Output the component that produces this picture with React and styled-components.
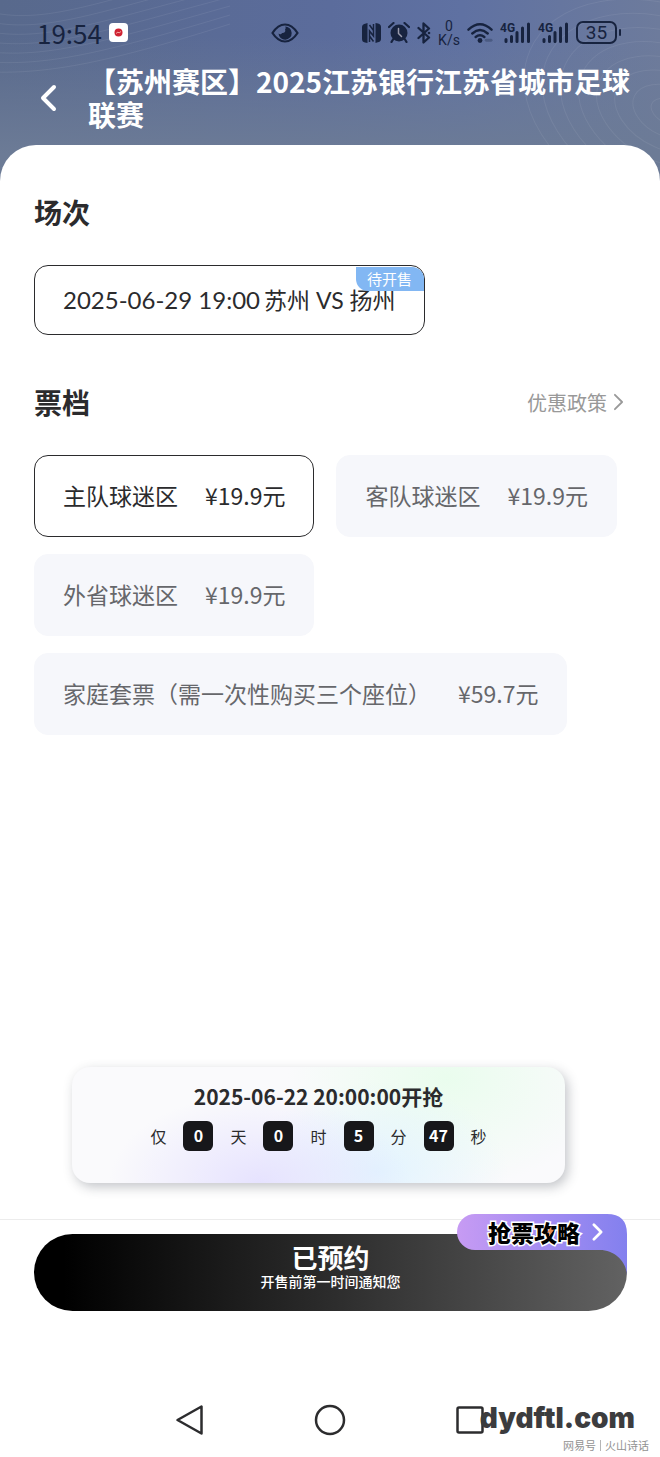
import React, { useState } from 'react'
import styled, { createGlobalStyle } from 'styled-components'

const INK = '#17233f'

const TICKETS = [
    { id: 'home', name: '主队球迷区', price: '¥19.9元' },
    { id: 'away', name: '客队球迷区', price: '¥19.9元' },
    { id: 'other', name: '外省球迷区', price: '¥19.9元' },
    { id: 'family', name: '家庭套票（需一次性购买三个座位）', price: '¥59.7元' }
]

const COUNTDOWN = [
    { value: '0', unit: '天' },
    { value: '0', unit: '时' },
    { value: '5', unit: '分' },
    { value: '47', unit: '秒' }
]

const Waves = () => (
    <WaveLines viewBox='0 0 660 181' preserveAspectRatio='none' aria-hidden='true'>
        {[0, 1, 2, 3, 4, 5, 6].map(i => (
            <path key={`l${i}`} d={`M-10 ${12 + i * 10}C50 ${26 + i * 8} 110 ${-4 + i * 11} 230 ${-30 + i * 9}`} />
        ))}
        {[0, 1, 2, 3, 4, 5, 6, 7].map(i => (
            <ellipse key={`r${i}`} cx='670' cy='112' rx={20 + i * 19} ry={12 + i * 13} transform='rotate(24 670 112)' />
        ))}
    </WaveLines>
)

const EyeIcon = () => (
    <svg width='28' height='22' viewBox='0 0 28 22' aria-hidden='true'>
        <path d='M1.500 11C5 5.500 9 2.500 14 2.500S23 5.500 26.500 11C23 16.500 19 19.500 14 19.500S5 16.500 1.500 11Z' fill='none' stroke={INK} strokeWidth='2.200' />
        <path d='M14 4.500A6.600 6.600 0 1 1 7.500 11.500C8.500 12.800 10.500 12.500 11 11C13.500 11 15 9.500 14 7.500C15 6.500 14.800 5 14 4.500Z' fill={INK} />
    </svg>
)

const NfcIcon = () => (
    <svg width='19' height='20' viewBox='0 0 19 20' aria-hidden='true'>
        <path d='M4 .5 5.500 0V20L3 19.500Q0 19 0 16V4Q0 1 4 .5ZM15 19.500 13.500 20V0L16 .5Q19 1 19 4V16Q19 19 15 19.500Z' fill={INK} />
        <path d='M7.500 19V8L11.500 13V1M7.500 2 11.500 7.500M7.500 13 11.500 18.500' fill='none' stroke={INK} strokeWidth='1.500' />
    </svg>
)

const AlarmIcon = () => (
    <svg width='22' height='21' viewBox='0 0 22 21' aria-hidden='true'>
        <circle cx='11' cy='11' r='8.500' fill={INK} />
        <path d='M1 5 5.500 1M21 5 16.500 1M5 17.500 3.500 20M17 17.500 18.500 20' stroke={INK} strokeWidth='2.200' strokeLinecap='round' />
        <path d='M10.500 6.500V11.500L13.500 14.500' fill='none' stroke='#9a9bad' strokeWidth='1.500' strokeLinecap='round' />
    </svg>
)

const BluetoothIcon = () => (
    <svg width='14' height='22' viewBox='0 0 14 22' aria-hidden='true'>
        <path d='M1.500 6 12 15.500 6.500 20.500V1.500L12 6.500 1.500 16' fill='none' stroke={INK} strokeWidth='2.300' strokeLinejoin='round' strokeLinecap='round' />
        <circle cx='12' cy='11' r='1.300' fill={INK} />
    </svg>
)

const WifiIcon = () => (
    <svg width='26' height='22' viewBox='0 0 27 22' aria-hidden='true'>
        <path d='M1.500 7.500Q13.500-3.500 25.500 7.500M5.500 11.500Q13.500 4.500 21.500 11.500M9 15.200Q13.500 11.500 18 15.200' fill='none' stroke={INK} strokeWidth='2.500' strokeLinecap='round' />
        <circle cx='13.500' cy='18.800' r='2.500' fill={INK} />
        <path d='M20 18.500H25' stroke={INK} strokeOpacity='.3' strokeWidth='3' strokeLinecap='round' />
    </svg>
)

const SignalIcon = () => (
    <svg width='31' height='28' viewBox='0 -3 31 28' aria-hidden='true'>
        <path d='M6 17.500V19.500M11.500 14.500V19.500M17 10.500V19.500M22.500 6V19.500M28.500 2V19.500' stroke={INK} strokeWidth='3' strokeLinecap='round' />
        <text x='0' y='10' fontSize='12' fontWeight='700' fontFamily='Roboto, sans-serif' fill={INK}>4G</text>
    </svg>
)

const Chevron = ({ size, color, width }) => (
    <svg width={size / 2 + 2} height={size} viewBox='0 0 12 20' aria-hidden='true'>
        <path d='M2 2 10 10 2 18' fill='none' stroke={color} strokeWidth={width} strokeLinecap='round' strokeLinejoin='round' />
    </svg>
)

const StatusBar = () => (
    <Status>
        <Clock>19:54</Clock>
        <AppBadge viewBox='0 0 19 19' aria-hidden='true'>
            <rect width='19' height='19' rx='4' fill='#fff' />
            <circle cx='9.500' cy='9.500' r='4' fill='#cf2232' />
            <path d='M7 10.500 9 9 10 10 12 8.500' fill='none' stroke='#f4a6a0' />
        </AppBadge>
        <EyeSlot><EyeIcon /></EyeSlot>
        <StatusIcons>
            <NfcIcon />
            <AlarmIcon />
            <BluetoothIcon />
            <Speed><span>0</span><span>K/s</span></Speed>
            <WifiIcon />
            <SignalIcon />
            <SignalIcon />
            <Battery><BatteryBody>35</BatteryBody><BatteryTip /></Battery>
        </StatusIcons>
    </Status>
)

const App = () => {
    const [ticket, setTicket] = useState('home')

    return (
        <Page>
            <GlobalStyle />

            <Header>
                <Waves />
                <StatusBar />
                <TitleRow>
                    <BackButton type='button' aria-label='返回'>
                        <svg width='17' height='28' viewBox='0 0 17 28'>
                            <path d='M14 3 3 14 14 25' fill='none' stroke='#fff' strokeWidth='4' strokeLinecap='round' strokeLinejoin='round' />
                        </svg>
                    </BackButton>
                    <Title>【苏州赛区】2025江苏银行江苏省城市足球联赛</Title>
                </TitleRow>
            </Header>

            <Sheet>
                <Section>
                    <Heading>场次</Heading>
                    <Session type='button'>
                        <SessionTime>2025-06-29 19:00</SessionTime>
                        <span>苏州 VS 扬州</span>
                        <SessionBadge>待开售</SessionBadge>
                    </Session>
                </Section>

                <Section>
                    <SectionHead>
                        <Heading>票档</Heading>
                        <PolicyLink href='#policy'>
                            优惠政策
                            <Chevron size={18} color='#999' width={2} />
                        </PolicyLink>
                    </SectionHead>
                    <Tickets>
                        {TICKETS.map(({ id, name, price }) => (
                            <Ticket
                                key={id}
                                type='button'
                                $active={id === ticket}
                                aria-pressed={id === ticket}
                                onClick={() => setTicket(id)}
                            >
                                <span>{name}</span>
                                <span>{price}</span>
                            </Ticket>
                        ))}
                    </Tickets>
                </Section>

                <CountdownCard>
                    <CountdownTitle>2025-06-22 20:00:00开抢</CountdownTitle>
                    <CountdownRow>
                        <span>仅</span>
                        {COUNTDOWN.map(({ value, unit }) => (
                            <React.Fragment key={unit}>
                                <Digit>{value}</Digit>
                                <span>{unit}</span>
                            </React.Fragment>
                        ))}
                    </CountdownRow>
                </CountdownCard>
            </Sheet>

            <ActionBar>
                <ReserveButton type='button'>
                    <strong>已预约</strong>
                    <small>开售前第一时间通知您</small>
                </ReserveButton>
                <GuideLink href='#guide'>
                    <GuideShape viewBox='0 0 170 62' aria-hidden='true'>
                        <defs>
                            <linearGradient id='guide' x1='0' x2='1'>
                                <stop offset='0' stopColor='#c79bf3' />
                                <stop offset='.5' stopColor='#a48df2' />
                                <stop offset='1' stopColor='#8380ee' />
                            </linearGradient>
                        </defs>
                        <path d='M18 0H150Q170 0 170 20V62C170 48 158 36 143 36H18A18 18 0 0 1 18 0Z' fill='url(#guide)' />
                    </GuideShape>
                    <GuideText>抢票攻略</GuideText>
                    <Bolt viewBox='0 0 8 12' aria-hidden='true'>
                        <path d='M5 0 0 7H3L2 12 8 4H5Z' fill='#f08a4b' />
                    </Bolt>
                    <Chevron size={18} color='#fff' width={3} />
                </GuideLink>
            </ActionBar>

            <NavBar>
                <NavButton type='button' aria-label='后退'>
                    <svg width='30' height='32' viewBox='0 0 30 32'>
                        <path d='M26.500 2.500V29.500L2.500 16Z' fill='none' stroke='#2c2c2e' strokeWidth='2.500' strokeLinejoin='round' />
                    </svg>
                </NavButton>
                <NavButton type='button' aria-label='主页'>
                    <svg width='32' height='32' viewBox='0 0 32 32'>
                        <circle cx='16' cy='16' r='14' fill='none' stroke='#2c2c2e' strokeWidth='2.500' />
                    </svg>
                </NavButton>
                <NavButton type='button' aria-label='最近任务'>
                    <svg width='32' height='32' viewBox='0 0 32 32'>
                        <rect x='3.500' y='3.500' width='25' height='25' rx='1.500' fill='none' stroke='#2c2c2e' strokeWidth='2.500' />
                    </svg>
                </NavButton>
                <SiteMark>dydftl.com</SiteMark>
                <SourceMark><span>网易号</span><i /><span>火山诗话</span></SourceMark>
            </NavBar>
        </Page>
    )
}

const GlobalStyle = createGlobalStyle`
  * {
    box-sizing: border-box;
  }
  body {
    margin: 0;
    background: #fff;
    font-family: 'Noto Sans CJK SC', sans-serif;
    color: #2b2b2d;
  }
  button {
    font: inherit;
    color: inherit;
    border: 0;
    padding: 0;
    background: none;
    cursor: pointer;
  }
  a {
    color: inherit;
    text-decoration: none;
  }
  svg {
    display: block;
    flex: none;
  }
`

const Page = styled.div`
  display: flex;
  flex-direction: column;
  min-height: 100vh;
`

const Header = styled.header`
  position: relative;
  padding-bottom: 50px;
  background:
    linear-gradient(180deg, rgba(110, 125, 150, 0) 20%, #6c7b96 85%),
    linear-gradient(90deg, #58698c 0%, #5b6c9c 50%, #5f71a2 70%, #6d7b9c 100%);
`

const WaveLines = styled.svg`
  position: absolute;
  inset: 0;
  width: 100%;
  height: 100%;
  fill: none;
  stroke: #fff;
  stroke-opacity: 0.07;
`

const Status = styled.div`
  position: relative;
  display: flex;
  align-items: center;
  height: 65px;
  padding: 0 39px 0 37px;
  color: ${INK};
`

const Clock = styled.time`
  font-size: 26px;
  line-height: 32px;
`

const AppBadge = styled.svg`
  width: 19px;
  height: 19px;
  margin-left: 7px;
`

const EyeSlot = styled.div`
  flex: 1;
  display: flex;
  justify-content: flex-end;
  padding-right: 63px;
`

const StatusIcons = styled.div`
  display: flex;
  align-items: center;
  gap: 7px;
`

const Speed = styled.div`
  display: flex;
  flex-direction: column;
  align-items: center;
  width: 22px;
  font-family: Roboto, sans-serif;
  font-size: 14px;
  line-height: 14px;
`

const Battery = styled.div`
  display: flex;
  align-items: center;
  gap: 2px;
`

const BatteryBody = styled.div`
  width: 41px;
  height: 23px;
  border: 2px solid ${INK};
  border-radius: 7px;
  font-family: Roboto, sans-serif;
  font-size: 19px;
  line-height: 19px;
  text-align: center;
`

const BatteryTip = styled.div`
  width: 2px;
  height: 7px;
  border-radius: 1px;
  background: ${INK};
`

const TitleRow = styled.div`
  position: relative;
  display: flex;
  align-items: center;
  padding: 0 16px 0 40px;
`

const BackButton = styled.button`
  width: 48px;
`

const Title = styled.h1`
  flex: 1;
  margin: 0;
  font-size: 28px;
  font-weight: 700;
  line-height: 33px;
  color: #fff;
`

const Sheet = styled.main`
  position: relative;
  flex: 1;
  display: flex;
  flex-direction: column;
  margin-top: -36px;
  padding: 47px 34px 36px;
  border-radius: 36px 36px 0 0;
  background: #fff;
`

const Section = styled.section`
  margin-bottom: 47px;
`

const SectionHead = styled.div`
  display: flex;
  align-items: center;
  justify-content: space-between;
`

const Heading = styled.h2`
  margin: 0;
  font-size: 28px;
  font-weight: 700;
  line-height: 40px;
`

const Session = styled.button`
  position: relative;
  display: flex;
  align-items: center;
  gap: 4px;
  height: 70px;
  margin-top: 33px;
  padding: 0 28px;
  border: 1px solid #2b2b2d;
  border-radius: 14px;
  font-family: Lato, 'Noto Sans CJK SC', sans-serif;
  font-size: 23px;
  line-height: 32px;
`

const SessionTime = styled.time`
  font-size: 24px;
`

const SessionBadge = styled.span`
  position: absolute;
  top: 1px;
  right: 0;
  width: 68px;
  height: 24px;
  border-radius: 0 12px 0 12px;
  background: #82b7f3;
  font-size: 15px;
  line-height: 24px;
  text-align: center;
  color: #fff;
`

const PolicyLink = styled.a`
  display: flex;
  align-items: center;
  gap: 6px;
  padding-right: 2px;
  font-size: 20px;
  color: #999;
`

const Tickets = styled.div`
  display: flex;
  flex-wrap: wrap;
  gap: 17px 22px;
  margin-top: 33px;
`

const Ticket = styled.button`
  display: flex;
  align-items: center;
  gap: 27px;
  height: 82px;
  padding: 0 28px 2px;
  border: 1px solid ${({ $active }) => ($active ? '#2b2b2d' : '#f6f7fb')};
  border-radius: 14px;
  background: ${({ $active }) => ($active ? '#fff' : '#f6f7fb')};
  font-size: 23px;
  color: ${({ $active }) => ($active ? '#2b2b2d' : '#66676b')};
`

const CountdownCard = styled.div`
  display: flex;
  flex-direction: column;
  align-items: center;
  height: 116px;
  margin: auto 61px 0 38px;
  padding-top: 14px;
  border-radius: 18px;
  background:
    radial-gradient(ellipse 150px 90px at 38% 100%, rgba(228, 224, 255, 0.9), rgba(228, 224, 255, 0)),
    radial-gradient(ellipse 130px 90px at 62% 90%, rgba(224, 243, 255, 0.9), rgba(224, 243, 255, 0)),
    radial-gradient(ellipse 160px 110px at 76% 10%, rgba(232, 253, 236, 0.9), rgba(232, 253, 236, 0)),
    #fafafc;
  box-shadow: 3px 4px 12px rgba(40, 45, 60, 0.28);
`

const CountdownTitle = styled.div`
  font-size: 21px;
  font-weight: 700;
  line-height: 30px;
`

const CountdownRow = styled.div`
  display: flex;
  align-items: center;
  gap: 17px;
  margin-top: 10px;
  font-size: 16px;
  line-height: 28px;
`

const Digit = styled.span`
  width: 30px;
  height: 30px;
  border-radius: 6px;
  background: #17171a;
  font-weight: 700;
  text-align: center;
  color: #fff;
`

const ActionBar = styled.div`
  position: relative;
  padding: 14px 33px 0 34px;
  border-top: 1px solid #ececec;
`

const ReserveButton = styled.button`
  display: flex;
  flex-direction: column;
  align-items: center;
  width: 100%;
  height: 77px;
  padding-top: 8px;
  border-radius: 39px;
  background: linear-gradient(90deg, #000 5%, #2a2a2a 48%, #626262 100%);
  color: #fff;

  strong {
    font-size: 26px;
    line-height: 30px;
  }
  small {
    font-size: 14px;
    font-weight: 500;
    line-height: 18px;
  }
`

const GuideLink = styled.a`
  position: absolute;
  top: -6px;
  right: 33px;
  display: flex;
  align-items: center;
  gap: 12px;
  width: 170px;
  height: 36px;
  padding-left: 31px;

  > svg:last-child {
    position: relative;
  }
`

const GuideShape = styled.svg`
  position: absolute;
  top: 0;
  left: 0;
  width: 170px;
  height: 62px;
`

const GuideText = styled.span`
  position: relative;
  font-size: 23px;
  font-weight: 900;
  line-height: 34px;
  color: #000;
  -webkit-text-stroke: 3px #fff;
  paint-order: stroke fill;
`

const Bolt = styled.svg`
  position: absolute;
  top: 12px;
  left: 90px;
  width: 7px;
  height: 11px;
`

const NavBar = styled.nav`
  position: relative;
  display: flex;
  align-items: center;
  justify-content: center;
  gap: 108px;
  height: 74px;
  margin-top: 72px;
`

const NavButton = styled.button`
  display: flex;
  justify-content: center;
  width: 32px;
`

const SiteMark = styled.div`
  position: absolute;
  top: 19px;
  right: 25px;
  font-family: Inter, sans-serif;
  font-size: 28px;
  font-weight: 900;
  line-height: 32px;
  color: #3c3c3e;
`

const SourceMark = styled.div`
  position: absolute;
  right: 11px;
  bottom: 2px;
  display: flex;
  align-items: center;
  font-size: 11px;
  line-height: 20px;
  color: #929292;

  i {
    width: 1px;
    height: 11px;
    margin: 0 4px;
    background: #b5b5b5;
  }
`

export default App
